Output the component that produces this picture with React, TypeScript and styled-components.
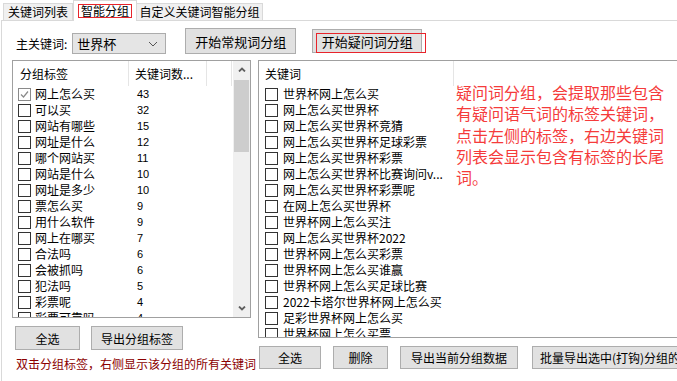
import React from 'react'
import styled, { createGlobalStyle } from 'styled-components'

const GlobalStyle = createGlobalStyle`
  html, body {
    margin: 0;
    padding: 0;
    background: #fff;
  }
  body {
    font-family: 'Noto Sans CJK SC', 'Noto Sans', sans-serif;
    font-size: 12px;
    color: #000;
  }
`

const Window = styled.div`
  width: 677px;
  height: 381px;
  overflow: hidden;
  background: #fff;
`

const TabBar = styled.div`
  display: flex;
  align-items: flex-end;
  height: 20px;
  padding-left: 3px;
  position: relative;
  z-index: 2;
`

const Tab = styled.div<{ active?: boolean; width: number }>`
  box-sizing: border-box;
  width: ${({ width }) => width}px;
  height: ${({ active }) => (active ? '21px' : '17px')};
  margin-bottom: ${({ active }) => (active ? '-1px' : '0')};
  border: 1px solid #d9d9d9;
  border-bottom: none;
  border-left: ${({ active }) => (active ? '1px solid #d9d9d9' : 'none')};
  background: ${({ active }) => (active ? '#fff' : '#f0f0f0')};
  display: flex;
  align-items: ${({ active }) => (active ? 'flex-start' : 'center')};
  justify-content: center;
  line-height: 14px;
  white-space: nowrap;

  &:first-child {
    border-left: 1px solid #d9d9d9;
  }
`

const FocusLabel = styled.span`
  margin-top: 3px;
  padding: 0 2px;
  border: 1px solid #e8242b;
  line-height: 12px;
  height: 12px;
`

const Panel = styled.div`
  margin-left: 1px;
  height: 360px;
  border-top: 1px solid #d9d9d9;
  border-left: 1px solid #d9d9d9;
`

const TopRow = styled.div`
  display: flex;
  align-items: flex-start;
  margin-top: 7px;
  padding-left: 14px;
  height: 26px;
`

const Label = styled.div`
  margin-top: 5px;
  height: 22px;
  line-height: 22px;
  white-space: nowrap;
`

const Combo = styled.div`
  box-sizing: border-box;
  margin-top: 5px;
  margin-left: 5px;
  width: 94px;
  height: 21px;
  border: 1px solid #acacac;
  background: #e5e5e5;
  display: flex;
  align-items: center;
  justify-content: space-between;
  padding: 0 7px 0 4px;
  font-size: 13px;
`

const Button = styled.button<{ width: number; height?: number; offset?: number; gapLeft?: number; size?: number }>`
  position: relative;
  box-sizing: border-box;
  width: ${({ width }) => width}px;
  height: ${({ height }) => height ?? 24}px;
  margin-top: ${({ offset }) => offset ?? 0}px;
  margin-left: ${({ gapLeft }) => gapLeft ?? 0}px;
  flex-shrink: 0;
  border: 1px solid #adadad;
  background: #e1e1e1;
  font-family: 'Noto Sans CJK SC', sans-serif;
  font-size: ${({ size }) => size ?? 12}px;
  color: #000;
  padding: 0;
  white-space: nowrap;
  overflow: visible;
`

const FocusRect = styled.span`
  position: absolute;
  left: 3px;
  top: 3px;
  width: 110px;
  height: 20px;
  border: 1px solid #e8242b;
  box-sizing: border-box;
`

const Main = styled.div`
  display: flex;
  margin-top: 6px;
  padding-left: 10px;
  gap: 7px;
`

const LeftCol = styled.div`
  width: 239px;
  flex-shrink: 0;
  display: flex;
  flex-direction: column;
`

const RightCol = styled.div`
  width: 440px;
  flex-shrink: 0;
  display: flex;
  flex-direction: column;
`

const ListBox = styled.div<{ height: number }>`
  box-sizing: border-box;
  height: ${({ height }) => height}px;
  border: 1px solid #a0a0a0;
  background: #fff;
  display: flex;
  position: relative;
  overflow: hidden;
`

const ListContent = styled.div`
  flex: 1;
  overflow: hidden;
`

const HeaderRow = styled.div`
  display: flex;
  height: 25px;
`

const HeaderCell = styled.div<{ width: number; pad?: number }>`
  box-sizing: border-box;
  width: ${({ width }) => width}px;
  flex-shrink: 0;
  padding-left: ${({ pad }) => pad ?? 6}px;
  border-right: 1px solid #e5e5e5;
  line-height: 25px;
  white-space: nowrap;
`

const Row = styled.div<{ indent: number }>`
  display: flex;
  align-items: center;
  height: 16px;
  padding-left: ${({ indent }) => indent}px;
  white-space: nowrap;
`

const Box = styled.span<{ checked?: boolean }>`
  box-sizing: border-box;
  width: 13px;
  height: 13px;
  flex-shrink: 0;
  border: 1px solid ${({ checked }) => (checked ? '#8a8a8a' : '#333')};
  background: #fff;
  display: flex;
  align-items: center;
  justify-content: center;
`

const Name = styled.span<{ width: number; gap: number }>`
  width: ${({ width }) => width}px;
  margin-left: ${({ gap }) => gap}px;
  line-height: 16px;
  overflow: hidden;
  white-space: nowrap;
`

const Count = styled.span`
  font-family: 'Liberation Sans', Arial, sans-serif;
  font-size: 11px;
  line-height: 16px;
`

const ScrollBar = styled.div`
  width: 17px;
  flex-shrink: 0;
  background: #f0f0f0;
  display: flex;
  flex-direction: column;
`

const ScrollArrow = styled.div`
  height: 17px;
  display: flex;
  align-items: center;
  justify-content: center;
`

const Thumb = styled.div`
  margin: 2px 1px 0 1px;
  height: 72px;
  background: #cdcdcd;
`

const Spacer = styled.div`
  flex: 1;
`

const ButtonRow = styled.div<{ top: number; left: number; gap: number }>`
  display: flex;
  margin-top: ${({ top }) => top}px;
  padding-left: ${({ left }) => left}px;
  gap: ${({ gap }) => gap}px;
`

const Hint = styled.div`
  margin-top: 6px;
  margin-left: 4px;
  color: #8b0000;
  line-height: 16px;
  white-space: nowrap;
`

const Help = styled.div`
  position: absolute;
  left: 197px;
  top: 21px;
  width: 212px;
  font-size: 16px;
  line-height: 21.3px;
  color: #f53b3b;
`

const Chevron = ({ up }: { up?: boolean }) => (
  <svg width='8' height='5' viewBox='0 0 8 5'>
    <polyline
      points={up ? '1,4.5 4,1.5 7,4.5' : '1,0.5 4,3.5 7,0.5'}
      fill='none'
      stroke='#606060'
      strokeWidth='1.8'
    />
  </svg>
)

const Check = () => (
  <svg width='11' height='11' viewBox='0 0 11 11'>
    <polyline points='2,5.5 4.5,8 9,2.5' fill='none' stroke='#8a8a8a' strokeWidth='1.2' />
  </svg>
)

const groups: [string, number][] = [
  ['网上怎么买', 43],
  ['可以买', 32],
  ['网站有哪些', 15],
  ['网址是什么', 12],
  ['哪个网站买', 11],
  ['网站是什么', 10],
  ['网址是多少', 10],
  ['票怎么买', 9],
  ['用什么软件', 9],
  ['网上在哪买', 7],
  ['合法吗', 6],
  ['会被抓吗', 6],
  ['犯法吗', 5],
  ['彩票呢', 4],
  ['彩票可靠吗', 4],
]

const keywords = [
  '世界杯网上怎么买',
  '网上怎么买世界杯',
  '网上怎么买世界杯竞猜',
  '网上怎么买世界杯足球彩票',
  '网上怎么买世界杯彩票',
  '网上怎么买世界杯比赛询问v...',
  '网上怎么买世界杯彩票呢',
  '在网上怎么买世界杯',
  '世界杯网上怎么买注',
  '网上怎么买世界杯2022',
  '世界杯网上怎么买彩票',
  '世界杯网上怎么买谁赢',
  '世界杯网上怎么买足球比赛',
  '2022卡塔尔世界杯网上怎么买',
  '足彩世界杯网上怎么买',
  '世界杯网上怎么买票',
]

export default function App() {
  return (
    <Window>
      <GlobalStyle />
      <TabBar>
        <Tab width={70}>关键词列表</Tab>
        <Tab width={64} active>
          <FocusLabel>智能分组</FocusLabel>
        </Tab>
        <Tab width={126}>自定义关键词智能分组</Tab>
      </TabBar>
      <Panel>
        <TopRow>
          <Label>主关键词:</Label>
          <Combo>
            <span>世界杯</span>
            <svg width='10' height='6' viewBox='0 0 10 6'>
              <polyline points='1,1 5,5 9,1' fill='none' stroke='#555' strokeWidth='1' />
            </svg>
          </Combo>
          <Button width={111} height={26} gapLeft={19} size={13}>
            开始常规词分组
          </Button>
          <Button width={110} height={24} offset={1} gapLeft={16} size={13}>
            开始疑问词分组
            <FocusRect />
          </Button>
        </TopRow>
        <Main>
          <LeftCol>
            <ListBox height={258}>
              <ListContent>
                <HeaderRow>
                  <HeaderCell width={116} pad={7}>分组标签</HeaderCell>
                  <HeaderCell width={78}>关键词数...</HeaderCell>
                  <HeaderCell width={25} />
                </HeaderRow>
                {groups.map(([name, count], i) => (
                  <Row key={name} indent={5}>
                    <Box checked={i === 0}>{i === 0 && <Check />}</Box>
                    <Name width={102} gap={4}>{name}</Name>
                    <Count>{count}</Count>
                  </Row>
                ))}
              </ListContent>
              <ScrollBar>
                <ScrollArrow>
                  <Chevron up />
                </ScrollArrow>
                <Thumb />
                <Spacer />
                <ScrollArrow>
                  <Chevron />
                </ScrollArrow>
              </ScrollBar>
            </ListBox>
            <ButtonRow top={8} left={3} gap={11}>
              <Button width={65}>全选</Button>
              <Button width={92}>导出分组标签</Button>
            </ButtonRow>
            <Hint>双击分组标签，右侧显示该分组的所有关键词</Hint>
          </LeftCol>
          <RightCol>
            <ListBox height={278}>
              <ListContent>
                <HeaderRow>
                  <HeaderCell width={195} pad={6}>关键词</HeaderCell>
                </HeaderRow>
                {keywords.map((k) => (
                  <Row key={k} indent={6}>
                    <Box />
                    <Name width={190} gap={5}>{k}</Name>
                  </Row>
                ))}
              </ListContent>
              <Help>
                疑问词分组，会提取那些包含有疑问语气词的标签关键词，点击左侧的标签，右边关键词列表会显示包含有标签的长尾词。
              </Help>
            </ListBox>
            <ButtonRow top={8} left={1} gap={12}>
              <Button width={62} height={23}>全选</Button>
              <Button width={55} height={23}>删除</Button>
              <Button width={118} height={23}>导出当前分组数据</Button>
              <Button width={180} height={23} gapLeft={2}>批量导出选中(打钩)分组的数据</Button>
            </ButtonRow>
          </RightCol>
        </Main>
      </Panel>
    </Window>
  )
}
